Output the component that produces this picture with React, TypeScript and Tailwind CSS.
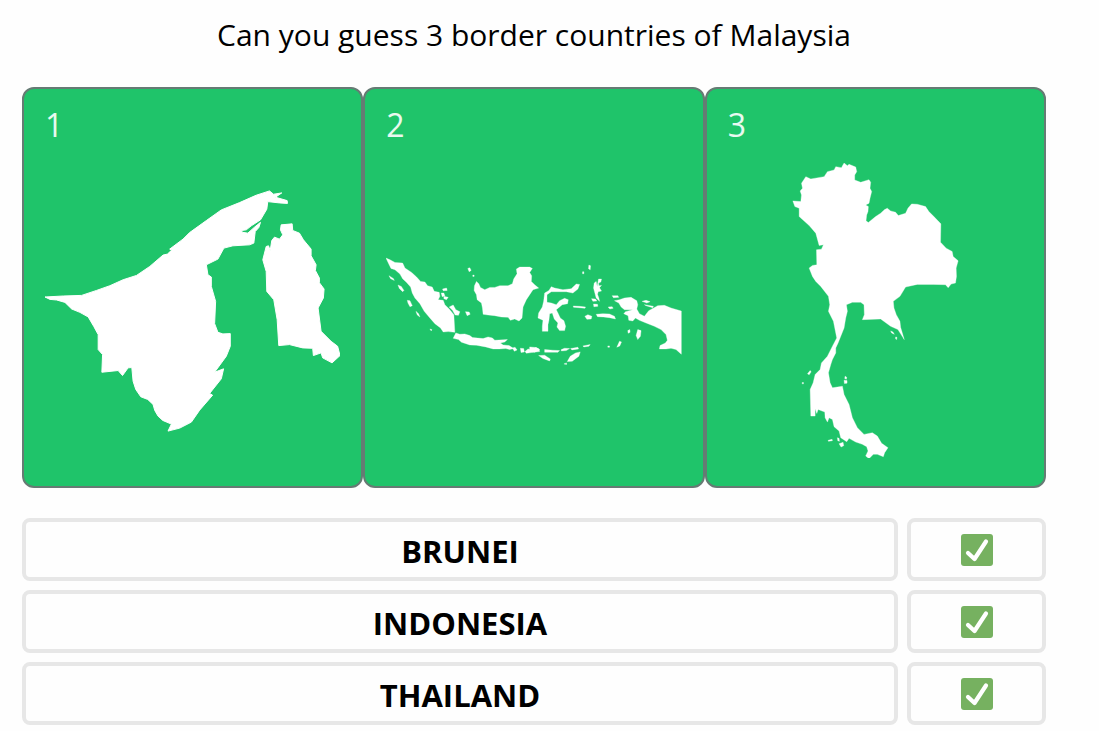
type Country = {
  name: string;
  viewBox: string;
  outline: string[];
  // drawn 450 units to the right of the main outline
  eastOutline?: string[];
};

const countries: Country[] = [
  {
    name: "Brunei",
    viewBox: "45 163 296 296",
    outline: [
      "M45 297.3L63.5 296.3L81.7 295.7L96.7 290.7L110 286L123.3 280L136.7 275.7L150 266.7L163.3 255.3L167.7 254.3L172 250.3L170 249.3L183.3 239.3L190 232.7L206.7 220.7L221.7 210L240 202.7L256.7 195.3L270 191L274 194.3L282.3 193L276 197.3L287.7 200.7L288 203.5L280 203L268.3 201.7L267.3 209.3L261 220L251.7 226L246.7 230L241.7 230.7L243 232.5L248.3 233.3L255 227.3L261 222.5L259.3 227.7L255.7 231.7L254.3 243.3L250 245L233.3 246L224.3 248.3L218.3 259.3L206.7 265L208.3 275L211.7 277.3L211.7 286.7L216 301.7L215 324L218.3 332.7L223.3 334.3L230.7 334L230.7 346.7L226.7 356.7L215 372.7L224 369.3L221.7 379.3L210 394L213 395.7L200 410.7L191.7 422.7L180 428.7L168.3 431.7L171.7 424.7L163 421L158.3 416.7L155 411L153.3 405L148 400L141 397.3L136 390L133.3 381.7L132 368L128.3 368.3L122.7 376L118.3 371L102 372.7L102.7 355L98.3 350L98.3 335L94 327L88.3 317.3L80 312.7L71.7 309.3L65 302.7L56.7 300.3L50 299.7Z",
      "M281.7 225L292.7 224L293.3 230.7L300 233.3L304 240L311.7 249.3L311.7 256L316.7 265L316 270.7L320 278.3L320 283L324.7 289.3L324 298.3L318.7 308.3L321.7 331.7L331.7 341.7L338.3 346.7L340.7 356L332.7 363.3L323.3 358.3L321.7 353.3L314 356L313.3 348.7L303.3 348.3L290 345L279.3 346L277.7 320L274.3 300L267.3 291.7L266.7 271.7L263.3 260L266.7 246.7L269 246L270.7 250.7L272.3 240.7L275 237.3L280 239.3L283.3 235L281 230Z",
    ],
  },
  {
    name: "Indonesia",
    viewBox: "18 -261 888 888",
    outline: [
      // Sumatra and the islands around it
      "M18 25L30 30L45 38L68 40L75 55L95 68L110 82L122 95L135 97L143 108L157 112L163 125L178 128L180 140L175 150L190 152L195 165L208 178L222 195L225 248L205 246L190 247L182 235L165 222L150 205L133 185L120 162L105 145L97 130L92 112L80 98L68 87L60 73L45 60L33 56L25 40Z",
      "M208 172L220 166L228 180L240 186L236 197L226 196L218 182Z",
      "M257 186L268 187L271 194L262 198Z",
      "M188 118L200 115L202 122L190 123ZM184 130l8 0 3 8 -8 3zM192 140L205 143L200 150L192 147Z",
      "M264 56L270 54L274 62L268 66ZM279 76l4 0 0 4 -4 0z",
      "M27 78L40 86L43 92L32 87ZM54 106L64 110L72 122L68 126L58 116ZM82 152L90 153L97 168L90 171L84 160ZM108 185L116 192L120 202L112 196ZM150 238L156 240L154 244Z",
      // Java and Bali
      "M228 250L240 254L255 253L270 258L278 264L310 267L325 262L338 265L345 272L383 270L375 277L362 280L370 286L388 288L402 297L390 300L378 297L358 298L340 298L318 292L290 287L270 286L245 278L236 270L220 266Z",
      "M398 295l8 -2 6 8 -8 4zM422 296l10 1 2 10 -10 2zM436 306L445 298L460 302L468 294L478 298L480 306L455 309L440 311Z",
      // Borneo
      "M290 95L297 102L302 113L315 120L330 113L345 113L360 108L385 108L398 102L402 88L412 72L410 58L420 52L450 52L458 56L450 68L456 78L455 95L465 105L477 115L460 120L450 135L440 150L430 172L427 205L418 214L405 208L392 212L385 203L365 202L345 198L325 196L310 194L308 175L305 160L292 150L290 135L283 122L284 108Z",
    ],
    eastOutline: [
      // Sulawesi
      "M45 130L58 122L65 111L75 115L100 120L125 117L140 103L150 104L145 118L130 130L110 126L85 126L65 126L52 135L52 158L65 160L80 165L90 153L105 146L116 150L114 162L98 165L80 180L85 190L92 205L103 213L108 230L105 243L90 243L82 232L85 220L74 208L68 190L60 192L58 212L55 225L55 245L38 245L38 230L40 212L25 205L27 190L38 172L42 155Z",
      // Maluku
      "M178 46l5 2 -1 12 -5 -3zM159 66l4 0 0 6 -4 0z",
      "M207 88L216 88L214 97L207 100L208 108L216 107L210 114L216 124L206 126L204 134L208 145L210 155L200 145L196 130L192 115L194 100L200 95L203 110Z",
      "M186 147L198 148L202 154L190 155ZM192 163l12 1 1 6 -12 1z",
      "M131 169L150 170L168 172L166 176L148 174L132 173Z",
      "M166 200L175 195L187 200L185 208L172 209Z",
      "M200 194L220 192L240 193L255 200L258 208L240 204L222 202L204 201Z",
      "M236 172l12 -1 3 5 -10 2zM248 138L265 138L268 143L252 144Z",
      // Papua
      "M255 153L270 150L285 145L305 143L322 153L325 165L322 178L330 192L345 200L358 183L385 168L405 167L425 175L456 184V314L440 300L425 296L410 298L390 298L392 288L408 280L414 272L410 255L395 240L375 230L350 220L330 212L318 205L310 214L298 212L296 198L283 192L288 186L310 180L285 180L275 172L268 160Z",
      "M338 155L350 152L362 156L352 160ZM345 165L372 170L370 174L350 168Z",
      "M325 240L335 243L333 260L325 270L320 258ZM295 243l6 -3 1 8 -6 3zM270 275l6 2 -5 12 -9 4zM235 289l5 0 0 4 -5 0z",
      // Lesser Sunda
      "M0 292L20 294L30 300L15 308L0 305ZM45 300L70 302L90 303L85 308L45 308ZM95 300l10 -4 15 1 -10 6 -15 1zM123 297L145 293L147 298L127 301ZM160 289L182 285L178 290L163 292Z",
      "M27 318L45 317L62 328L60 334L40 327ZM152 307L148 320L128 335L113 336L122 320L138 310ZM103 343l8 -3 0 5z",
    ],
  },
  {
    name: "Thailand",
    viewBox: "-159 24 888 888",
    outline: [
      "M190 24L200 32L205 28L225 36L228 50L222 60L222 75L240 82L265 74L270 82L268 100L273 110L268 130L265 145L255 150L263 155L262 170L258 180L256 198L263 203L285 185L300 175L312 164L320 160L330 168L345 172L353 182L375 175L382 160L393 147L410 148L435 155L445 170L460 185L481 207L480 262L497 280L515 290L518 305L533 318L527 340L528 365L525 385L512 388L503 399L495 390L460 389L410 389L375 397L358 425L338 440L340 460L347 480L358 500L360 518L371 555L352 525L330 515L300 493L245 495L251 480L250 450L240 443L215 443L197 450L200 470L195 490L190 520L178 550L172 565L165 580L165 595L155 615L150 630L143 655L148 685L155 700L185 695L190 720L205 750L215 790L230 820L250 840L275 835L290 845L303 867L322 880L312 895L308 907L290 900L278 900L265 913L255 905L262 890L258 877L245 870L225 863L205 852L198 862L180 850L175 830L160 817L155 795L145 790L140 803L133 790L132 773L112 765L108 777L103 763L103 785L90 785L88 705L97 685L103 660L118 645L122 625L140 605L155 575L168 550L162 520L158 500L143 470L147 450L143 425L120 395L105 380L95 365L85 340L95 332L108 330L107 285L122 283L128 270L115 272L105 235L85 212L55 185L55 160L42 155L36 138L60 140L62 120L58 108L65 100L62 85L75 65L90 72L130 65L140 50L160 45L165 35L182 38Z",
      "M88 648l3 4 -6 9 -5 -3zM64 684l4 0 0 4 -4 0zM193 665l5 3 -1 6 -5 -2zM190 677l9 1 0 8 -8 1z",
      "M170 850l5 2 1 9 -5 -2zM175 868l12 -4 2 10 -8 4zM142 858l12 -3 1 4 -12 2z",
      "M330 529l7 3 4 7 -8 -4zM345 547l4 1 -1 7 -3 -2z",
    ],
  },
];

function CountryCard({ country, index }: { country: Country; index: number }) {
  return (
    <li className="min-w-0 flex-1 rounded-xl border-2 border-[#667b74] bg-[#1fc46a] px-[21px] pt-4 pb-[28px]">
      <p className="text-[32px] leading-10 text-white/90">{index + 1}</p>
      <svg
        viewBox={country.viewBox}
        role="img"
        aria-label={`Country shape ${index + 1}`}
        className="mt-[18px] aspect-square w-full fill-white stroke-white stroke-1 [stroke-linejoin:round]"
      >
        {country.outline.map((d) => (
          <path key={d} d={d} />
        ))}
        {country.eastOutline && (
          <g transform="translate(450 0)">
            {country.eastOutline.map((d) => (
              <path key={d} d={d} />
            ))}
          </g>
        )}
      </svg>
    </li>
  );
}

function CheckMark() {
  return (
    <svg viewBox="0 0 32 32" role="img" aria-label="Correct" className="size-8">
      <rect width="32" height="32" rx="3" fill="#76b160" />
      <path
        d="M7 19L13.5 25L25 7.5"
        fill="none"
        stroke="white"
        strokeWidth="4.2"
        strokeLinecap="round"
        strokeLinejoin="round"
      />
    </svg>
  );
}

export default function App() {
  return (
    <main className="min-h-screen bg-[#fefefe] pt-[15px] pr-[53px] pl-[22px] font-['Open_Sans','Noto_Sans',sans-serif] text-black">
      <h1 className="text-center text-3xl leading-10">
        Can you guess {countries.length} border countries of Malaysia
      </h1>

      <ol className="mt-8 flex">
        {countries.map((country, index) => (
          <CountryCard key={country.name} country={country} index={index} />
        ))}
      </ol>

      <ul className="mt-[30px] flex flex-col gap-[9px]">
        {countries.map((country) => (
          <li key={country.name} className="flex h-[63px] gap-[9px]">
            <div className="flex flex-1 items-center justify-center rounded-lg border-4 border-[#e7e7e7] pt-0.5 text-[31px] leading-10 font-bold uppercase">
              {country.name}
            </div>
            <div className="flex w-[139px] items-center justify-center rounded-lg border-4 border-[#e7e7e7]">
              <CheckMark />
            </div>
          </li>
        ))}
      </ul>
    </main>
  );
}
